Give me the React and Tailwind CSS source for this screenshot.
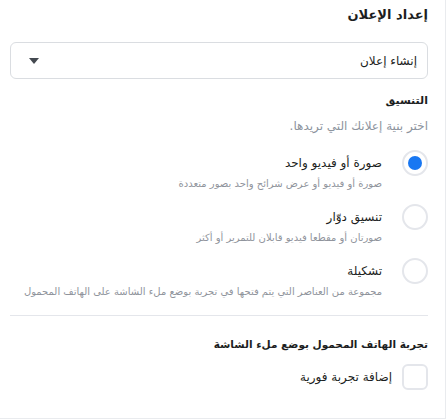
import { useState } from 'react'

const FORMATS = [
  { id: 'single', label: 'صورة أو فيديو واحد', desc: 'صورة أو فيديو أو عرض شرائح واحد بصور متعددة' },
  { id: 'carousel', label: 'تنسيق دوّار', desc: 'صورتان أو مقطعا فيديو قابلان للتمرير أو أكثر' },
  { id: 'collection', label: 'تشكيلة', desc: 'مجموعة من العناصر التي يتم فتحها في تجربة بوضع ملء الشاشة على الهاتف المحمول' },
]

export default function App(){
  const [format, setFormat] = useState('single')
  const [instant, setInstant] = useState(false)

  return (
    <div dir="rtl" className="w-[446px] h-[419px] bg-white border-r border-b border-[#e9ebee] text-[#1c1e21]"
      style={{ fontFamily: '"DejaVu Sans", "Liberation Sans", sans-serif' }}>
      <div className="pr-[17px] pl-[10px] pt-[6px]">
        <h2 className="text-[13px] font-bold leading-[18px]">إعداد الإعلان</h2>

        <button className="mt-[18px] w-full h-[37px] flex items-center justify-between px-[10px] border border-[#dadde1] rounded-[6px] bg-white">
          <span className="text-[12px] text-[#1c1e21]">إنشاء إعلان</span>
          <svg width="10" height="6" viewBox="0 0 10 6" className="ml-[8px]">
            <path d="M0 0h10L5 6z" fill="#444950" />
          </svg>
        </button>

        <h3 className="mt-[14px] text-[11px] font-bold leading-[16px]">التنسيق</h3>
        <p className="mt-[10px] text-[12px] text-[#8d949e] leading-[14px]">اختر بنية إعلانك التي تريدها.</p>

        <div className="mt-[17px] flex flex-col gap-[13px]">
          {FORMATS.map(f=>(
            <label key={f.id} className="flex items-start gap-[20px] cursor-pointer" onClick={()=>setFormat(f.id)}>
              <span className="w-[26px] h-[26px] shrink-0 rounded-full border-2 border-[#e4e6eb] bg-white flex items-center justify-center">
                {format===f.id && <span className="w-[14px] h-[14px] rounded-full bg-[#1877f2]" />}
              </span>
              <span className="flex flex-col pt-[5px]">
                <span className="text-[12px] leading-[16px] text-[#1c1e21]">{f.label}</span>
                <span className="mt-[6px] text-[10px] leading-[14px] text-[#90949c] whitespace-nowrap">{f.desc}</span>
              </span>
            </label>
          ))}
        </div>

        <div className="mt-[16px] border-t border-[#e4e6eb]" />

        <h3 className="mt-[20px] text-[10.5px] font-bold leading-[16px]">تجربة الهاتف المحمول بوضع ملء الشاشة</h3>

        <label className="mt-[12px] flex items-center gap-[10px] cursor-pointer" onClick={()=>setInstant(v=>!v)}>
          <span className="w-[26px] h-[26px] shrink-0 rounded-[6px] border-2 border-[#e4e6eb] bg-white flex items-center justify-center">
            {instant && <span className="w-[12px] h-[12px] rounded-[2px] bg-[#1877f2]" />}
          </span>
          <span className="text-[12px] text-[#1c1e21]">إضافة تجربة فورية</span>
        </label>
      </div>
    </div>
  )
}
